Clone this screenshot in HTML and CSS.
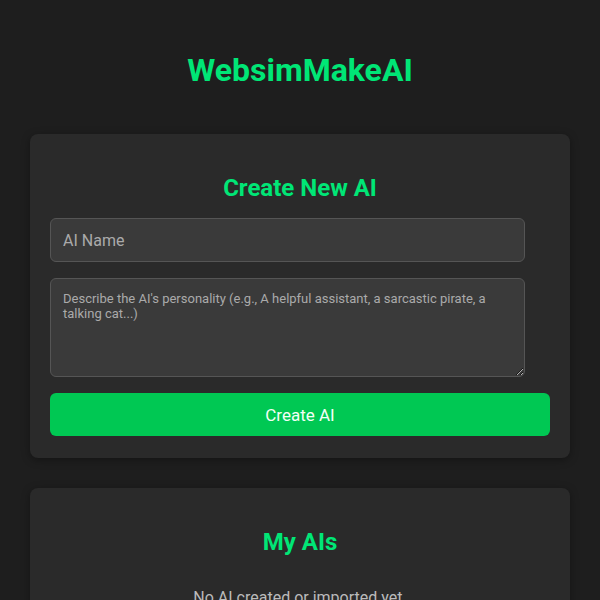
FILE: index.html
```html
<!DOCTYPE html>
<html lang="en">
<head>
<meta charset="utf-8">
<title>WebsimMakeAI</title>
<link rel="stylesheet" href="styles.css">
</head>
<body>
<div class="app">
  <h1 class="title">WebsimMakeAI</h1>
  <section class="card">
    <h2 class="card-title">Create New AI</h2>
    <input class="field name" type="text" placeholder="AI Name">
    <textarea class="field area" placeholder="Describe the AI's personality (e.g., A helpful assistant, a sarcastic pirate, a talking cat...)"></textarea>
    <button class="btn">Create AI</button>
  </section>
  <section class="card">
    <h2 class="card-title">My AIs</h2>
    <p class="empty">No AI created or imported yet.</p>
  </section>
</div>
</body>
</html>
```

FILE: styles.css
```css
html, body {
  margin: 0;
  padding: 0;
  background: #1e1e1e;
  font-family: Roboto, "Liberation Sans", Arial, sans-serif;
  color: #e0e0e0;
}
.app {
  padding: 30px 30px;
}
.title {
  margin: 21px 0 45px;
  text-align: center;
  font-size: 32px;
  font-weight: 700;
  color: #00e676;
}
.card {
  display: flex;
  flex-direction: column;
  align-items: flex-start;
  background: #2a2a2a;
  border-radius: 8px;
  padding: 20px 20px 22px;
  margin-bottom: 30px;
  box-shadow: 0 2px 8px rgba(0, 0, 0, 0.35);
}
.card-title {
  align-self: stretch;
  margin: 20px 0 16px;
  text-align: center;
  font-size: 24px;
  font-weight: 700;
  color: #00e676;
}
.field {
  box-sizing: border-box;
  width: 95%;
  padding: 12px;
  margin: 0 0 16px;
  background: #3a3a3a;
  border: 1px solid #555;
  border-radius: 6px;
  color: #eee;
  font-family: Roboto, "Liberation Sans", Arial, sans-serif;
  font-size: 16px;
  outline: none;
}
.field::placeholder {
  color: #aaa;
}
.name {
  height: 44px;
}
.area {
  height: 99px;
  font-size: 13px;
  line-height: 15px;
  resize: vertical;
}
.btn {
  align-self: stretch;
  height: 43px;
  padding: 0 12px;
  border: none;
  border-radius: 6px;
  background: #00c853;
  color: #f4fff6;
  font-family: Roboto, "Liberation Sans", Arial, sans-serif;
  font-size: 17px;
  cursor: pointer;
}
.empty {
  align-self: stretch;
  margin: 0;
  text-align: center;
  font-size: 16px;
  color: #bbb;
  padding-top: 16px;
}
```
